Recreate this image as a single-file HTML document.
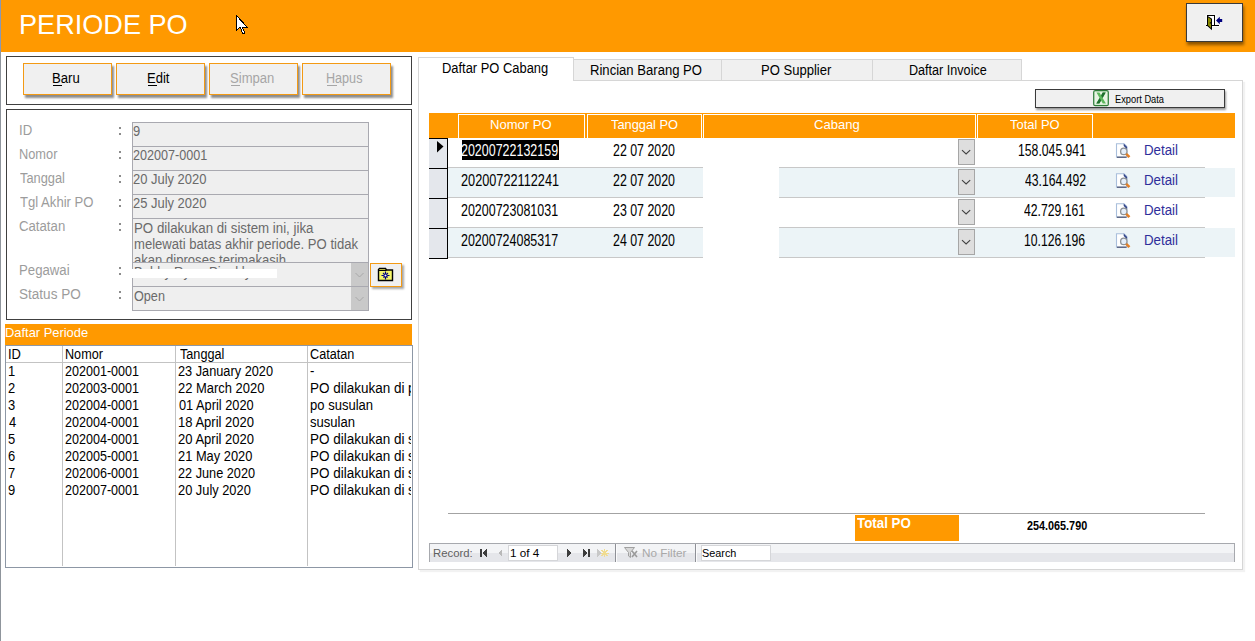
<!DOCTYPE html>
<html><head><meta charset="utf-8">
<style>
*{margin:0;padding:0;box-sizing:border-box}
html,body{width:1255px;height:641px;overflow:hidden;background:#fff}
body{position:relative;font-family:"Liberation Sans",sans-serif;color:#000}
.a{position:absolute}
.t{position:absolute;white-space:nowrap;line-height:1}
</style></head><body>
<div class="a" style="left:0px;top:0px;width:1px;height:52px;background:#8a98b4"></div>
<div class="a" style="left:0px;top:52px;width:1px;height:589px;background:#8f959c"></div>
<div class="a" style="left:1px;top:0px;width:1254px;height:52px;background:#ff9900"></div>
<div class="a" style="left:1186px;top:3px;width:57px;height:39px;background:#f0f0f0;border:1px solid #3a3a3a;box-shadow:1px 3px 3px rgba(0,0,0,.45)"></div>
<svg class="a" style="left:1204px;top:13px" width="22" height="20" viewBox="0 0 22 20">
<path d="M1.5 1.5h11v10h3v2.5h-7v3.5L1.5 13.5z" fill="#fff" opacity=".7"/>
<path d="M4 3h6v9H4z" fill="#fff"/>
<path d="M3 2h8v10h4v1H8v-1h2V3H4v9H2v1h1z" fill="#000"/><path d="M2 12h2v1H2z" fill="#000"/>
<path d="M3 2.5l5 3.2v11.5L3 12.8z" fill="#000"/>
<path d="M4 4.2l3 2v8.8L4 12.2z" fill="#8c8c00"/>
<path d="M5.8 9.3h1.2v1.2H5.8z" fill="#000"/>
<path d="M12 7.4l3.8-3.6v2.1h2.4v3.2h-2.4v2.1z" fill="#000080"/>
</svg>
<div class="a" style="left:6px;top:56px;width:406px;height:49px;border:1px solid #404040"></div>
<div class="a" style="left:23px;top:63px;width:89px;height:32px;background:#f0f0f0;border:1px solid #f39a14;box-shadow:2px 3px 2px rgba(0,0,0,.45)"></div>
<div class="a" style="left:116px;top:63px;width:89px;height:32px;background:#f0f0f0;border:1px solid #f39a14;box-shadow:2px 3px 2px rgba(0,0,0,.45)"></div>
<div class="a" style="left:209px;top:63px;width:89px;height:32px;background:#f0f0f0;border:1px solid #f39a14;box-shadow:2px 3px 2px rgba(0,0,0,.45)"></div>
<div class="a" style="left:302px;top:63px;width:89px;height:32px;background:#f0f0f0;border:1px solid #f39a14;box-shadow:2px 3px 2px rgba(0,0,0,.45)"></div>
<div class="a" style="left:53px;top:85px;width:9px;height:1px;background:#000"></div>
<div class="a" style="left:148px;top:85px;width:9px;height:1px;background:#000"></div>
<div class="a" style="left:231px;top:85px;width:9px;height:1px;background:#a6a6a6"></div>
<div class="a" style="left:327px;top:85px;width:10px;height:1px;background:#a6a6a6"></div>
<div class="a" style="left:6px;top:109px;width:406px;height:211px;border:1px solid #404040"></div>
<div class="a" style="left:132px;top:122px;width:237px;height:25px;background:#efefef;border:1px solid #a9a9b0"></div>
<div class="a" style="left:132px;top:146px;width:237px;height:25px;background:#efefef;border:1px solid #a9a9b0"></div>
<div class="a" style="left:132px;top:170px;width:237px;height:25px;background:#efefef;border:1px solid #a9a9b0"></div>
<div class="a" style="left:132px;top:194px;width:237px;height:25px;background:#efefef;border:1px solid #a9a9b0"></div>
<div class="a" style="left:132px;top:218px;width:237px;height:45px;background:#efefef;border:1px solid #a9a9b0"></div>
<div class="a" style="left:132px;top:262px;width:237px;height:25px;background:#efefef;border:1px solid #a9a9b0"></div>
<div class="a" style="left:132px;top:286px;width:237px;height:25px;background:#efefef;border:1px solid #a9a9b0"></div>
<div class="a" style="left:351px;top:263px;width:17px;height:23px;background:#c9c9c9"></div>
<svg class="a" style="left:354px;top:271px" width="11" height="8" viewBox="0 0 11 8"><path d="M1.5 2l4 4 4-4" fill="none" stroke="#a9a9a9" stroke-width="1"/></svg>
<div class="a" style="left:351px;top:287px;width:17px;height:23px;background:#c9c9c9"></div>
<svg class="a" style="left:354px;top:295px" width="11" height="8" viewBox="0 0 11 8"><path d="M1.5 2l4 4 4-4" fill="none" stroke="#a9a9a9" stroke-width="1"/></svg>
<div class="a" style="left:370px;top:263px;width:32px;height:24px;background:#f0f0f0;border:1px solid #f39a14;box-shadow:2px 2px 2px rgba(0,0,0,.35)"></div>
<svg class="a" style="left:377px;top:267px" width="17" height="15" viewBox="0 0 17 15">
<path d="M1.5 13.5V2.5l1-1h6l1 1.5h6v10.5z" fill="#f6f66a" stroke="#000" stroke-width="1.4"/>
<path d="M1.5 3.5h8" stroke="#000" stroke-width="1"/>
<path d="M8.5 4.5v8M4.5 8.5h8" stroke="#000080" stroke-width="1.2"/>
<path d="M6 6l5 5M11 6l-5 5" stroke="#000080" stroke-width="1.1" stroke-dasharray="1.2 2.6 2.6"/>
<circle cx="8.5" cy="8.5" r="1.6" fill="#fff" stroke="#000080" stroke-width="1.1"/>
</svg>
<div class="a" style="left:5px;top:324px;width:407px;height:21px;background:#ff9900"></div>
<div class="a" style="left:5px;top:345px;width:408px;height:223px;border:1px solid #8d97a5"></div>
<div class="a" style="left:6px;top:362px;width:405px;height:1px;background:#c3c3c3"></div>
<div class="a" style="left:62px;top:346px;width:1px;height:220px;background:#c3c3c3"></div>
<div class="a" style="left:175px;top:346px;width:1px;height:220px;background:#c3c3c3"></div>
<div class="a" style="left:307px;top:346px;width:1px;height:220px;background:#c3c3c3"></div>
<div class="a" style="left:418px;top:80px;width:825px;height:490px;border:1px solid #d6d6d6;box-shadow:2px 2px 1px rgba(0,0,0,.05)"></div>
<div class="a" style="left:418px;top:57px;width:156px;height:24px;background:#fff;border:1px solid #d6d6d6;border-bottom:none"></div>
<div class="a" style="left:573px;top:59px;width:149px;height:22px;background:#f0f0f0;border:1px solid #d6d6d6"></div>
<div class="a" style="left:721px;top:59px;width:152px;height:22px;background:#f0f0f0;border:1px solid #d6d6d6"></div>
<div class="a" style="left:872px;top:59px;width:150px;height:22px;background:#f0f0f0;border:1px solid #d6d6d6"></div>
<div class="a" style="left:1035px;top:89px;width:190px;height:19px;background:#f0f0f0;border:1px solid #3a3a3a;box-shadow:1px 2px 2px rgba(0,0,0,.4)"></div>
<svg class="a" style="left:1093px;top:90px" width="17" height="17" viewBox="0 0 17 17">
<rect x="0.7" y="0.7" width="14.6" height="15" rx="1.5" fill="#d9edd5" stroke="#2e7d3a" stroke-width="1.2"/>
<path d="M2 2h12v12H2z" fill="#e8f4e4"/>
<path d="M3.5 2.5h3l1.6 3 1.6-3h3L9.6 8l3.3 5.6h-3.1L8.1 10.4l-1.7 3.2H3.3L6.6 8z" fill="#5cb85c"/>
<path d="M8.1 5.5l1.6-3h3L9.6 8zM6.6 8l-3.3 5.6h3.1l1.7-3.2z" fill="#1f6f2f"/>
</svg>
<div class="a" style="left:429px;top:113px;width:806px;height:25px;background:#ff9900"></div>
<div class="a" style="left:458px;top:114px;width:127px;height:24px;border:1px solid #fff;border-bottom:none"></div>
<div class="a" style="left:587px;top:114px;width:115px;height:24px;border:1px solid #fff;border-bottom:none"></div>
<div class="a" style="left:703px;top:114px;width:273px;height:24px;border:1px solid #fff;border-bottom:none"></div>
<div class="a" style="left:977px;top:114px;width:116px;height:24px;border:1px solid #fff;border-bottom:none"></div>
<div class="a" style="left:448px;top:167px;width:255px;height:1px;background:#c8c8c8"></div>
<div class="a" style="left:779px;top:167px;width:426px;height:1px;background:#c8c8c8"></div>
<div class="a" style="left:429px;top:138px;width:18px;height:30px;background:#e4e7ec"></div>
<div class="a" style="left:429px;top:138px;width:19px;height:1px;background:#000"></div>
<div class="a" style="left:447px;top:138px;width:1px;height:30px;background:#000"></div>
<div class="a" style="left:958px;top:139px;width:17px;height:26px;background:#dedede;border:1px solid #a6a6a6"></div>
<svg class="a" style="left:960px;top:149px" width="13" height="8" viewBox="0 0 13 8"><path d="M2 1.2l4.1 3.7 4.1-3.7" fill="none" stroke="#404040" stroke-width="1.1"/></svg>
<svg class="a" style="left:1115px;top:143px" width="17" height="17" viewBox="0 0 17 17">
<path d="M1.5 0.7h7.5l2.8 2.8v10.8H1.5z" fill="#fff" stroke="#a9bfdc" stroke-width="1.1"/>
<path d="M2 14.2h9.5" stroke="#4e5878" stroke-width="1.3"/>
<path d="M8.7 0.5l3.4 3.4v2.5L8.7 3z" fill="#34468a"/>
<circle cx="8.8" cy="8.4" r="3.2" fill="#e4eefa" stroke="#8e9296" stroke-width="1.3"/>
<path d="M11.2 10.8l3.2 3.4" stroke="#e2802a" stroke-width="2.6"/>
</svg>
<div class="a" style="left:448px;top:168px;width:255px;height:29px;background:#ecf4f7"></div>
<div class="a" style="left:779px;top:168px;width:456px;height:29px;background:#ecf4f7"></div>
<div class="a" style="left:448px;top:197px;width:255px;height:1px;background:#c8c8c8"></div>
<div class="a" style="left:779px;top:197px;width:426px;height:1px;background:#c8c8c8"></div>
<div class="a" style="left:429px;top:168px;width:18px;height:30px;background:#e4e7ec"></div>
<div class="a" style="left:429px;top:168px;width:19px;height:1px;background:#000"></div>
<div class="a" style="left:447px;top:168px;width:1px;height:30px;background:#000"></div>
<div class="a" style="left:958px;top:169px;width:17px;height:26px;background:#dedede;border:1px solid #a6a6a6"></div>
<svg class="a" style="left:960px;top:179px" width="13" height="8" viewBox="0 0 13 8"><path d="M2 1.2l4.1 3.7 4.1-3.7" fill="none" stroke="#404040" stroke-width="1.1"/></svg>
<svg class="a" style="left:1115px;top:173px" width="17" height="17" viewBox="0 0 17 17">
<path d="M1.5 0.7h7.5l2.8 2.8v10.8H1.5z" fill="#fff" stroke="#a9bfdc" stroke-width="1.1"/>
<path d="M2 14.2h9.5" stroke="#4e5878" stroke-width="1.3"/>
<path d="M8.7 0.5l3.4 3.4v2.5L8.7 3z" fill="#34468a"/>
<circle cx="8.8" cy="8.4" r="3.2" fill="#e4eefa" stroke="#8e9296" stroke-width="1.3"/>
<path d="M11.2 10.8l3.2 3.4" stroke="#e2802a" stroke-width="2.6"/>
</svg>
<div class="a" style="left:448px;top:227px;width:255px;height:1px;background:#c8c8c8"></div>
<div class="a" style="left:779px;top:227px;width:426px;height:1px;background:#c8c8c8"></div>
<div class="a" style="left:429px;top:198px;width:18px;height:30px;background:#e4e7ec"></div>
<div class="a" style="left:429px;top:198px;width:19px;height:1px;background:#000"></div>
<div class="a" style="left:447px;top:198px;width:1px;height:30px;background:#000"></div>
<div class="a" style="left:958px;top:199px;width:17px;height:26px;background:#dedede;border:1px solid #a6a6a6"></div>
<svg class="a" style="left:960px;top:209px" width="13" height="8" viewBox="0 0 13 8"><path d="M2 1.2l4.1 3.7 4.1-3.7" fill="none" stroke="#404040" stroke-width="1.1"/></svg>
<svg class="a" style="left:1115px;top:203px" width="17" height="17" viewBox="0 0 17 17">
<path d="M1.5 0.7h7.5l2.8 2.8v10.8H1.5z" fill="#fff" stroke="#a9bfdc" stroke-width="1.1"/>
<path d="M2 14.2h9.5" stroke="#4e5878" stroke-width="1.3"/>
<path d="M8.7 0.5l3.4 3.4v2.5L8.7 3z" fill="#34468a"/>
<circle cx="8.8" cy="8.4" r="3.2" fill="#e4eefa" stroke="#8e9296" stroke-width="1.3"/>
<path d="M11.2 10.8l3.2 3.4" stroke="#e2802a" stroke-width="2.6"/>
</svg>
<div class="a" style="left:448px;top:228px;width:255px;height:29px;background:#ecf4f7"></div>
<div class="a" style="left:779px;top:228px;width:456px;height:29px;background:#ecf4f7"></div>
<div class="a" style="left:448px;top:257px;width:255px;height:1px;background:#c8c8c8"></div>
<div class="a" style="left:779px;top:257px;width:426px;height:1px;background:#c8c8c8"></div>
<div class="a" style="left:429px;top:228px;width:18px;height:30px;background:#e4e7ec"></div>
<div class="a" style="left:429px;top:228px;width:19px;height:1px;background:#000"></div>
<div class="a" style="left:447px;top:228px;width:1px;height:30px;background:#000"></div>
<div class="a" style="left:958px;top:229px;width:17px;height:26px;background:#dedede;border:1px solid #a6a6a6"></div>
<svg class="a" style="left:960px;top:239px" width="13" height="8" viewBox="0 0 13 8"><path d="M2 1.2l4.1 3.7 4.1-3.7" fill="none" stroke="#404040" stroke-width="1.1"/></svg>
<svg class="a" style="left:1115px;top:233px" width="17" height="17" viewBox="0 0 17 17">
<path d="M1.5 0.7h7.5l2.8 2.8v10.8H1.5z" fill="#fff" stroke="#a9bfdc" stroke-width="1.1"/>
<path d="M2 14.2h9.5" stroke="#4e5878" stroke-width="1.3"/>
<path d="M8.7 0.5l3.4 3.4v2.5L8.7 3z" fill="#34468a"/>
<circle cx="8.8" cy="8.4" r="3.2" fill="#e4eefa" stroke="#8e9296" stroke-width="1.3"/>
<path d="M11.2 10.8l3.2 3.4" stroke="#e2802a" stroke-width="2.6"/>
</svg>
<div class="a" style="left:429px;top:258px;width:19px;height:1px;background:#000"></div>
<svg class="a" style="left:437px;top:141px" width="7" height="12" viewBox="0 0 7 12"><path d="M0 0l6.5 5.5L0 11.5z" fill="#000"/></svg>
<div class="a" style="left:462px;top:140px;width:97px;height:20px;background:#000"></div>
<div class="a" style="left:448px;top:513px;width:757px;height:1px;background:#a3a3a3"></div>
<div class="a" style="left:855px;top:515px;width:104px;height:26px;background:#ff9900"></div>
<div class="a" style="left:429px;top:543px;width:806px;height:19px;background:linear-gradient(#f3f4f6 0,#f3f4f6 50%,#e5e6ea 50%,#e5e6ea 100%);border:1px solid #a7a9ae;border-bottom:none"></div>
<div class="a" style="left:508px;top:545px;width:50px;height:16px;background:#fff;border:1px solid #d5d6d9"></div>
<div class="a" style="left:701px;top:545px;width:70px;height:16px;background:#fff;border:1px solid #d5d6d9"></div>
<div class="a" style="left:615px;top:544px;width:1px;height:18px;background:#8e9096"></div>
<div class="a" style="left:616px;top:544px;width:1px;height:18px;background:#fbfbfc"></div>
<div class="a" style="left:695px;top:544px;width:1px;height:18px;background:#8e9096"></div>
<div class="a" style="left:696px;top:544px;width:1px;height:18px;background:#fbfbfc"></div>
<svg class="a" style="left:479px;top:548px" width="135" height="10" viewBox="0 0 135 10" shape-rendering="crispEdges">
<path d="M1 1h2v8H1zM8 1v8L3 5z" fill="#3c3c3c"/>
<path d="M23 1v8l-4-4z" fill="#b9b9b9"/>
<path d="M88 1l5 4-5 4z" fill="#3c3c3c"/>
<path d="M104 1l4.5 4-4.5 4zM109 1h1.5v8H109z" fill="#3c3c3c"/>
<path d="M118 1l4 4-4 4z" fill="#c8c8c8"/>
<path d="M125.5 1v8M121.5 5h8M122.5 2l6 6M128.5 2l-6 6" stroke="#f0dc90" stroke-width="1"/>
</svg>
<svg class="a" style="left:624px;top:547px" width="15" height="12" viewBox="0 0 15 12">
<path d="M0.5 0.5h10l-4 5v5l-2-1.5v-3.5z" fill="#d8d8d8" stroke="#a0a0a0"/>
<path d="M8 4l5 6M13 4l-5 6" stroke="#9a9a9a" stroke-width="1.6"/>
</svg>
<svg class="a" style="left:236px;top:15px" width="13" height="20" viewBox="0 0 13 20" shape-rendering="crispEdges">
<path d="M0 0v16l4-4 3 7 2-1-3-6h5z" fill="#fff" stroke="#000" stroke-width="1"/>
</svg>
<div class="t" style="left:19px;top:11px;font-size:28px;letter-spacing:0.000px;color:#fff;transform:scaleX(0.9678);transform-origin:0 0">PERIODE PO</div>
<div class="t" style="left:52px;top:71px;font-size:14px;letter-spacing:0.000px;color:#000;transform:scaleX(0.9393);transform-origin:0 0">Baru</div>
<div class="t" style="left:147px;top:71px;font-size:14px;letter-spacing:0.000px;color:#000;transform:scaleX(0.9307);transform-origin:0 0">Edit</div>
<div class="t" style="left:230px;top:71px;font-size:14px;letter-spacing:0.000px;color:#a6a6a6;transform:scaleX(0.9348);transform-origin:0 0">Simpan</div>
<div class="t" style="left:326px;top:71px;font-size:14px;letter-spacing:0.000px;color:#a6a6a6;transform:scaleX(0.9002);transform-origin:0 0">Hapus</div>
<div class="t" style="left:19px;top:123px;font-size:14px;letter-spacing:0.000px;color:#9c9c9c;transform:scaleX(0.9426);transform-origin:0 0">ID</div>
<div class="t" style="left:19px;top:147px;font-size:14px;letter-spacing:0.000px;color:#9c9c9c;transform:scaleX(0.9148);transform-origin:0 0">Nomor</div>
<div class="t" style="left:20px;top:171px;font-size:14px;letter-spacing:0.000px;color:#9c9c9c;transform:scaleX(0.9167);transform-origin:0 0">Tanggal</div>
<div class="t" style="left:20px;top:195px;font-size:14px;letter-spacing:0.000px;color:#9c9c9c;transform:scaleX(0.9359);transform-origin:0 0">Tgl Akhir PO</div>
<div class="t" style="left:19px;top:219px;font-size:14px;letter-spacing:0.000px;color:#9c9c9c;transform:scaleX(0.9426);transform-origin:0 0">Catatan</div>
<div class="t" style="left:19px;top:263px;font-size:14px;letter-spacing:0.000px;color:#9c9c9c;transform:scaleX(0.9426);transform-origin:0 0">Pegawai</div>
<div class="t" style="left:19px;top:287px;font-size:14px;letter-spacing:0.000px;color:#9c9c9c;transform:scaleX(0.9677);transform-origin:0 0">Status PO</div>
<div class="t" style="left:133px;top:124px;font-size:14px;letter-spacing:0.000px;color:#6a6a6a;transform:scaleX(0.9244);transform-origin:0 0">9</div>
<div class="t" style="left:133px;top:148px;font-size:14px;letter-spacing:0.000px;color:#6a6a6a;transform:scaleX(0.9012);transform-origin:0 0">202007-0001</div>
<div class="t" style="left:133px;top:172px;font-size:14px;letter-spacing:0.000px;color:#6a6a6a;transform:scaleX(0.9244);transform-origin:0 0">20 July 2020</div>
<div class="t" style="left:133px;top:196px;font-size:14px;letter-spacing:0.000px;color:#6a6a6a;transform:scaleX(0.9244);transform-origin:0 0">25 July 2020</div>
<div class="a" style="left:133px;top:219px;width:235px;height:43px;overflow:hidden"><div class="t" style="left:1px;top:2px;font-size:14px;letter-spacing:0.000px;color:#6a6a6a;transform:scaleX(0.9489);transform-origin:0 0">PO dilakukan di sistem ini, jika</div></div>
<div class="a" style="left:133px;top:219px;width:235px;height:43px;overflow:hidden"><div class="t" style="left:1px;top:18px;font-size:14px;letter-spacing:0.000px;color:#6a6a6a;transform:scaleX(0.9347);transform-origin:0 0">melewati batas akhir periode. PO tidak</div></div>
<div class="a" style="left:133px;top:219px;width:235px;height:43px;overflow:hidden"><div class="t" style="left:1px;top:34px;font-size:14px;letter-spacing:0.000px;color:#6a6a6a;transform:scaleX(0.9347);transform-origin:0 0">akan diproses terimakasih</div></div>
<div class="a" style="left:133px;top:263px;width:218px;height:23px;overflow:hidden"><div class="t" style="left:1px;top:2px;font-size:14px;letter-spacing:0.000px;color:#6a6a6a;transform:scaleX(0.9347);transform-origin:0 0">Bubby</div></div>
<div class="a" style="left:133px;top:263px;width:218px;height:23px;overflow:hidden"><div class="t" style="left:41px;top:2px;font-size:14px;letter-spacing:0.000px;color:#6a6a6a;transform:scaleX(0.9347);transform-origin:0 0">Ryan</div></div>
<div class="a" style="left:133px;top:263px;width:218px;height:23px;overflow:hidden"><div class="t" style="left:76px;top:2px;font-size:14px;letter-spacing:0.000px;color:#6a6a6a;transform:scaleX(0.9347);transform-origin:0 0">Pinakly</div></div>
<div class="t" style="left:134px;top:289px;font-size:14px;letter-spacing:0.000px;color:#6a6a6a;transform:scaleX(0.9033);transform-origin:0 0">Open</div>
<div class="t" style="left:5px;top:326px;font-size:13px;letter-spacing:0.000px;color:#fff;transform:scaleX(0.9915);transform-origin:0 0">Daftar Periode</div>
<div class="t" style="left:8px;top:347px;font-size:14px;letter-spacing:0.000px;color:#000;transform:scaleX(0.9244);transform-origin:0 0">ID</div>
<div class="t" style="left:65px;top:347px;font-size:14px;letter-spacing:0.000px;color:#000;transform:scaleX(0.9024);transform-origin:0 0">Nomor</div>
<div class="t" style="left:180px;top:347px;font-size:14px;letter-spacing:0.000px;color:#000;transform:scaleX(0.9042);transform-origin:0 0">Tanggal</div>
<div class="t" style="left:310px;top:347px;font-size:14px;letter-spacing:0.000px;color:#000;transform:scaleX(0.9042);transform-origin:0 0">Catatan</div>
<div class="t" style="left:442px;top:61px;font-size:14px;letter-spacing:0.000px;color:#000;transform:scaleX(0.9220);transform-origin:0 0">Daftar PO Cabang</div>
<div class="t" style="left:590px;top:63px;font-size:14px;letter-spacing:0.000px;color:#000;transform:scaleX(0.9347);transform-origin:0 0">Rincian Barang PO</div>
<div class="t" style="left:761px;top:63px;font-size:14px;letter-spacing:0.000px;color:#000;transform:scaleX(0.9312);transform-origin:0 0">PO Supplier</div>
<div class="t" style="left:909px;top:63px;font-size:14px;letter-spacing:0.000px;color:#000;transform:scaleX(0.9000);transform-origin:0 0">Daftar Invoice</div>
<div class="t" style="left:1115px;top:94px;font-size:11px;letter-spacing:0.000px;color:#000;transform:scaleX(0.8440);transform-origin:0 0">Export Data</div>
<div class="t" style="left:490px;top:118px;font-size:13px;letter-spacing:0.000px;color:#fff;transform:scaleX(1.0018);transform-origin:0 0">Nomor PO</div>
<div class="t" style="left:611px;top:118px;font-size:13px;letter-spacing:0.000px;color:#fff;transform:scaleX(0.9866);transform-origin:0 0">Tanggal PO</div>
<div class="t" style="left:814px;top:118px;font-size:13px;letter-spacing:0.000px;color:#fff;transform:scaleX(1.0025);transform-origin:0 0">Cabang</div>
<div class="t" style="left:1010px;top:118px;font-size:13px;letter-spacing:0.000px;color:#fff;transform:scaleX(0.9961);transform-origin:0 0">Total PO</div>
<div class="t" style="left:857px;top:516px;font-size:14px;font-weight:700;letter-spacing:0.000px;color:#fff;transform:scaleX(0.9536);transform-origin:0 0">Total PO</div>
<div class="t" style="left:1027px;top:520px;font-size:12px;font-weight:700;letter-spacing:0.000px;color:#000;transform:scaleX(0.9016);transform-origin:0 0">254.065.790</div>
<div class="t" style="left:433px;top:548px;font-size:11.5px;letter-spacing:0.000px;color:#5f5f5f;transform:scaleX(0.9843);transform-origin:0 0">Record:</div>
<div class="t" style="left:510px;top:548px;font-size:11.5px;letter-spacing:0.000px;color:#000;transform:scaleX(1.0150);transform-origin:0 0">1 of 4</div>
<div class="t" style="left:642px;top:548px;font-size:11.5px;letter-spacing:0.000px;color:#a8a8a8;transform:scaleX(1.0216);transform-origin:0 0">No Filter</div>
<div class="t" style="left:702px;top:548px;font-size:11.5px;letter-spacing:0.000px;color:#000;transform:scaleX(0.9429);transform-origin:0 0">Search</div>
<div class="t" style="left:8px;top:364px;font-size:14px;letter-spacing:0.000px;color:#000;transform:scaleX(0.9244);transform-origin:0 0">1</div>
<div class="t" style="left:65px;top:364px;font-size:14px;letter-spacing:0.000px;color:#000;transform:scaleX(0.8975);transform-origin:0 0">202001-0001</div>
<div class="t" style="left:178px;top:364px;font-size:14px;letter-spacing:0.000px;color:#000;transform:scaleX(0.9107);transform-origin:0 0">23 January 2020</div>
<div class="a" style="left:308px;top:346px;width:103px;height:220px;overflow:hidden"><div class="t" style="left:2px;top:18px;font-size:14px;letter-spacing:0.000px;color:#000;transform:scaleX(0.9321);transform-origin:0 0">-</div></div>
<div class="t" style="left:8px;top:381px;font-size:14px;letter-spacing:0.000px;color:#000;transform:scaleX(0.9244);transform-origin:0 0">2</div>
<div class="t" style="left:65px;top:381px;font-size:14px;letter-spacing:0.000px;color:#000;transform:scaleX(0.8975);transform-origin:0 0">202003-0001</div>
<div class="t" style="left:178px;top:381px;font-size:14px;letter-spacing:0.000px;color:#000;transform:scaleX(0.9250);transform-origin:0 0">22 March 2020</div>
<div class="a" style="left:308px;top:346px;width:103px;height:220px;overflow:hidden"><div class="t" style="left:2px;top:35px;font-size:14px;letter-spacing:0.000px;color:#000;transform:scaleX(0.9625);transform-origin:0 0">PO dilakukan di p</div></div>
<div class="t" style="left:8px;top:398px;font-size:14px;letter-spacing:0.000px;color:#000;transform:scaleX(0.9244);transform-origin:0 0">3</div>
<div class="t" style="left:65px;top:398px;font-size:14px;letter-spacing:0.000px;color:#000;transform:scaleX(0.8975);transform-origin:0 0">202004-0001</div>
<div class="t" style="left:179px;top:398px;font-size:14px;letter-spacing:0.000px;color:#000;transform:scaleX(0.9141);transform-origin:0 0">01 April 2020</div>
<div class="a" style="left:308px;top:346px;width:103px;height:220px;overflow:hidden"><div class="t" style="left:2px;top:52px;font-size:14px;letter-spacing:0.000px;color:#000;transform:scaleX(0.9321);transform-origin:0 0">po susulan</div></div>
<div class="t" style="left:9px;top:415px;font-size:14px;letter-spacing:0.000px;color:#000;transform:scaleX(0.9244);transform-origin:0 0">4</div>
<div class="t" style="left:65px;top:415px;font-size:14px;letter-spacing:0.000px;color:#000;transform:scaleX(0.8975);transform-origin:0 0">202004-0001</div>
<div class="t" style="left:178px;top:415px;font-size:14px;letter-spacing:0.000px;color:#000;transform:scaleX(0.9300);transform-origin:0 0">18 April 2020</div>
<div class="a" style="left:308px;top:346px;width:103px;height:220px;overflow:hidden"><div class="t" style="left:2px;top:69px;font-size:14px;letter-spacing:0.000px;color:#000;transform:scaleX(0.9321);transform-origin:0 0">susulan</div></div>
<div class="t" style="left:8px;top:432px;font-size:14px;letter-spacing:0.000px;color:#000;transform:scaleX(0.9244);transform-origin:0 0">5</div>
<div class="t" style="left:65px;top:432px;font-size:14px;letter-spacing:0.000px;color:#000;transform:scaleX(0.8975);transform-origin:0 0">202004-0001</div>
<div class="t" style="left:178px;top:432px;font-size:14px;letter-spacing:0.000px;color:#000;transform:scaleX(0.9300);transform-origin:0 0">20 April 2020</div>
<div class="a" style="left:308px;top:346px;width:103px;height:220px;overflow:hidden"><div class="t" style="left:2px;top:86px;font-size:14px;letter-spacing:0.000px;color:#000;transform:scaleX(0.9625);transform-origin:0 0">PO dilakukan di s</div></div>
<div class="t" style="left:8px;top:449px;font-size:14px;letter-spacing:0.000px;color:#000;transform:scaleX(0.9244);transform-origin:0 0">6</div>
<div class="t" style="left:65px;top:449px;font-size:14px;letter-spacing:0.000px;color:#000;transform:scaleX(0.8975);transform-origin:0 0">202005-0001</div>
<div class="t" style="left:178px;top:449px;font-size:14px;letter-spacing:0.000px;color:#000;transform:scaleX(0.9188);transform-origin:0 0">21 May 2020</div>
<div class="a" style="left:308px;top:346px;width:103px;height:220px;overflow:hidden"><div class="t" style="left:2px;top:103px;font-size:14px;letter-spacing:0.000px;color:#000;transform:scaleX(0.9625);transform-origin:0 0">PO dilakukan di s</div></div>
<div class="t" style="left:8px;top:466px;font-size:14px;letter-spacing:0.000px;color:#000;transform:scaleX(0.9244);transform-origin:0 0">7</div>
<div class="t" style="left:65px;top:466px;font-size:14px;letter-spacing:0.000px;color:#000;transform:scaleX(0.8975);transform-origin:0 0">202006-0001</div>
<div class="t" style="left:178px;top:466px;font-size:14px;letter-spacing:0.000px;color:#000;transform:scaleX(0.9085);transform-origin:0 0">22 June 2020</div>
<div class="a" style="left:308px;top:346px;width:103px;height:220px;overflow:hidden"><div class="t" style="left:2px;top:120px;font-size:14px;letter-spacing:0.000px;color:#000;transform:scaleX(0.9625);transform-origin:0 0">PO dilakukan di s</div></div>
<div class="t" style="left:8px;top:483px;font-size:14px;letter-spacing:0.000px;color:#000;transform:scaleX(0.9244);transform-origin:0 0">9</div>
<div class="t" style="left:65px;top:483px;font-size:14px;letter-spacing:0.000px;color:#000;transform:scaleX(0.8975);transform-origin:0 0">202007-0001</div>
<div class="t" style="left:178px;top:483px;font-size:14px;letter-spacing:0.000px;color:#000;transform:scaleX(0.9167);transform-origin:0 0">20 July 2020</div>
<div class="a" style="left:308px;top:346px;width:103px;height:220px;overflow:hidden"><div class="t" style="left:2px;top:137px;font-size:14px;letter-spacing:0.000px;color:#000;transform:scaleX(0.9625);transform-origin:0 0">PO dilakukan di s</div></div>
<div class="t" style="left:461px;top:142px;font-size:15px;letter-spacing:0.000px;color:#fff;transform:scale(0.8314,1.100);transform-origin:0 0">20200722132159</div>
<div class="t" style="left:613px;top:142px;font-size:15px;letter-spacing:0.000px;color:#000;transform:scale(0.8258,1.100);transform-origin:0 0">22 07 2020</div>
<div class="t" style="left:1018px;top:142px;font-size:15px;letter-spacing:0.000px;color:#000;transform:scale(0.8147,1.100);transform-origin:0 0">158.045.941</div>
<div class="t" style="left:1144px;top:143px;font-size:14px;letter-spacing:0.000px;color:#2e2e9a;transform:scaleX(0.9500);transform-origin:0 0">Detail</div>
<div class="t" style="left:461px;top:172px;font-size:15px;letter-spacing:0.000px;color:#000;transform:scale(0.8474,1.100);transform-origin:0 0">20200722112241</div>
<div class="t" style="left:613px;top:172px;font-size:15px;letter-spacing:0.000px;color:#000;transform:scale(0.8258,1.100);transform-origin:0 0">22 07 2020</div>
<div class="t" style="left:1025px;top:172px;font-size:15px;letter-spacing:0.000px;color:#000;transform:scale(0.8121,1.100);transform-origin:0 0">43.164.492</div>
<div class="t" style="left:1144px;top:173px;font-size:14px;letter-spacing:0.000px;color:#2e2e9a;transform:scaleX(0.9500);transform-origin:0 0">Detail</div>
<div class="t" style="left:461px;top:202px;font-size:15px;letter-spacing:0.000px;color:#000;transform:scale(0.8314,1.100);transform-origin:0 0">20200723081031</div>
<div class="t" style="left:613px;top:202px;font-size:15px;letter-spacing:0.000px;color:#000;transform:scale(0.8258,1.100);transform-origin:0 0">23 07 2020</div>
<div class="t" style="left:1024px;top:202px;font-size:15px;letter-spacing:0.000px;color:#000;transform:scale(0.8121,1.100);transform-origin:0 0">42.729.161</div>
<div class="t" style="left:1144px;top:203px;font-size:14px;letter-spacing:0.000px;color:#2e2e9a;transform:scaleX(0.9500);transform-origin:0 0">Detail</div>
<div class="t" style="left:461px;top:232px;font-size:15px;letter-spacing:0.000px;color:#000;transform:scale(0.8314,1.100);transform-origin:0 0">20200724085317</div>
<div class="t" style="left:613px;top:232px;font-size:15px;letter-spacing:0.000px;color:#000;transform:scale(0.8258,1.100);transform-origin:0 0">24 07 2020</div>
<div class="t" style="left:1024px;top:232px;font-size:15px;letter-spacing:0.000px;color:#000;transform:scale(0.8121,1.100);transform-origin:0 0">10.126.196</div>
<div class="t" style="left:1144px;top:233px;font-size:14px;letter-spacing:0.000px;color:#2e2e9a;transform:scaleX(0.9500);transform-origin:0 0">Detail</div>
<div class="a" style="left:119px;top:127px;width:2px;height:2px;background:#8c8c8c"></div>
<div class="a" style="left:119px;top:133px;width:2px;height:2px;background:#8c8c8c"></div>
<div class="a" style="left:119px;top:151px;width:2px;height:2px;background:#8c8c8c"></div>
<div class="a" style="left:119px;top:157px;width:2px;height:2px;background:#8c8c8c"></div>
<div class="a" style="left:119px;top:175px;width:2px;height:2px;background:#8c8c8c"></div>
<div class="a" style="left:119px;top:181px;width:2px;height:2px;background:#8c8c8c"></div>
<div class="a" style="left:119px;top:199px;width:2px;height:2px;background:#8c8c8c"></div>
<div class="a" style="left:119px;top:205px;width:2px;height:2px;background:#8c8c8c"></div>
<div class="a" style="left:119px;top:223px;width:2px;height:2px;background:#8c8c8c"></div>
<div class="a" style="left:119px;top:229px;width:2px;height:2px;background:#8c8c8c"></div>
<div class="a" style="left:119px;top:267px;width:2px;height:2px;background:#8c8c8c"></div>
<div class="a" style="left:119px;top:273px;width:2px;height:2px;background:#8c8c8c"></div>
<div class="a" style="left:119px;top:291px;width:2px;height:2px;background:#8c8c8c"></div>
<div class="a" style="left:119px;top:297px;width:2px;height:2px;background:#8c8c8c"></div>
<div class="a" style="left:132px;top:269px;width:145px;height:9px;background:#fff"></div>
</body></html>
